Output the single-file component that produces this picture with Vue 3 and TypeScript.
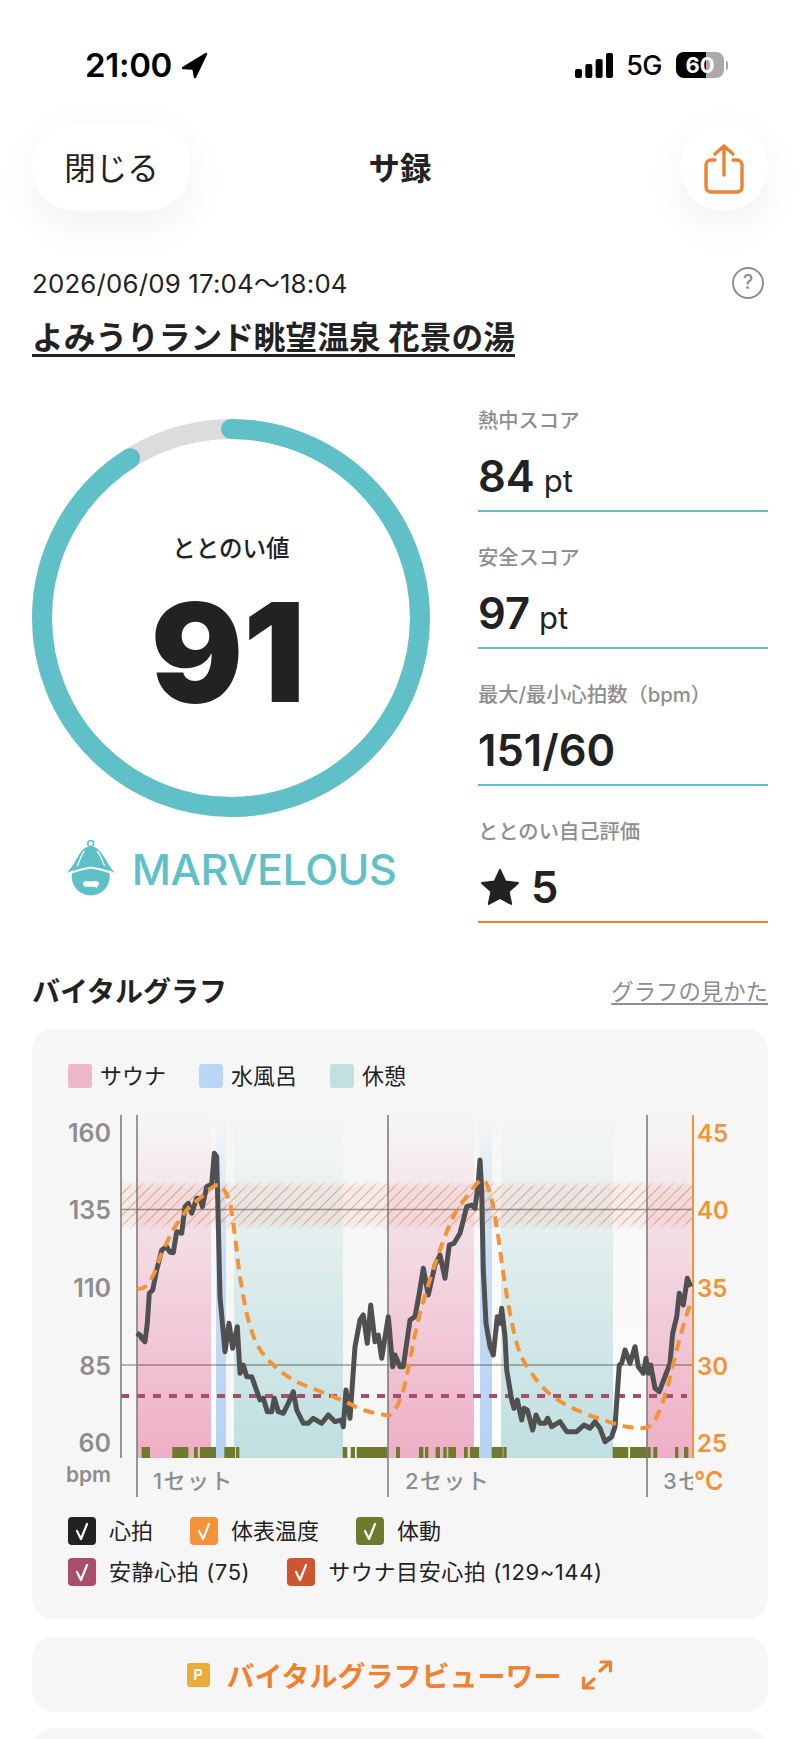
<script setup lang="ts">
type Pt = [number, number]

// traced from the chart, zoom coordinates: x = ox + zx / 3, y = 1090 + zy / 3
const toReal = (pts: Pt[], ox: number): Pt[] => pts.map(([x, y]) => [ox + x / 3, 1090 + y / 3])

const heartA = toReal([
  [320, 730], [330, 735], [335, 745], [345, 755], [352, 700], [358, 610], [368, 600], [380, 540], [395, 480],
  [410, 470], [420, 487], [430, 488], [440, 425], [455, 430], [465, 350], [475, 340], [485, 370], [500, 325],
  [510, 325], [517, 350], [530, 290], [545, 283], [553, 190], [560, 200], [565, 400], [570, 620], [585, 785],
  [597, 700], [608, 775], [622, 710], [630, 850], [640, 825], [650, 860], [665, 860], [690, 930], [700, 925],
  [712, 965], [725, 965], [733, 925], [745, 965], [760, 970], [775, 940], [790, 905], [800, 960], [820, 1000],
  [835, 1000], [850, 985], [875, 1000], [895, 975], [915, 995], [935, 990], [940, 1010], [948, 900], [960, 985],
  [975, 770], [990, 690], [1000, 675], [1012, 760], [1022, 645], [1035, 755], [1045, 735], [1055, 805], [1075, 680],
], 30)

const heartB = toReal([
  [38, 830], [45, 795], [60, 830], [70, 830], [90, 690], [105, 680], [118, 610], [130, 535], [145, 615], [165, 525],
  [180, 495], [195, 565], [208, 465], [222, 460], [240, 430], [260, 350], [275, 345], [285, 355], [295, 280],
  [300, 210], [305, 300], [310, 540], [318, 700], [330, 770], [340, 795], [352, 680], [360, 700], [365, 655],
  [375, 740], [380, 840], [395, 930], [402, 955], [412, 930], [425, 990], [432, 955], [442, 960], [458, 1020],
  [468, 975], [480, 1000], [495, 1000], [503, 985], [515, 1010], [540, 995], [560, 1025], [590, 1025], [612, 1005],
  [630, 1015], [645, 995], [660, 1015], [675, 1055], [695, 1040], [705, 1010], [718, 825], [725, 820], [735, 780],
  [750, 820], [765, 770], [775, 830], [790, 850], [798, 805], [805, 850], [812, 825], [825, 895], [838, 905],
  [870, 820], [878, 730], [890, 680], [898, 610], [910, 645], [922, 565], [932, 590],
], 380)

const tempA = toReal([
  [320, 598], [345, 590], [370, 555], [395, 490], [430, 420], [470, 360], [510, 325], [550, 290], [575, 290],
  [600, 340], [615, 440], [630, 560], [655, 690], [685, 770], [730, 825], [790, 870], [860, 900], [945, 935],
  [1000, 960], [1065, 975],
], 30)

const tempB = toReal([
  [30, 975], [50, 950], [70, 900], [90, 810], [110, 710], [140, 600], [180, 480], [220, 380], [260, 320], [305, 270],
  [330, 310], [350, 410], [370, 550], [390, 670], [420, 790], [470, 870], [520, 920], [590, 960], [670, 990],
  [740, 1010], [800, 1012], [830, 980], [860, 900], [890, 780], [915, 690], [935, 630],
], 380)

const linePath = (pts: Pt[]) => 'M' + pts.map(([x, y]) => `${x.toFixed(1)} ${y.toFixed(1)}`).join('L')

// catmull-rom so the temperature curve stays smooth
const smoothPath = (pts: Pt[]) => {
  let d = `M${pts[0][0].toFixed(1)} ${pts[0][1].toFixed(1)}`
  for (let i = 0; i < pts.length - 1; i++) {
    const p0 = pts[i - 1] ?? pts[i]
    const p1 = pts[i]
    const p2 = pts[i + 1]
    const p3 = pts[i + 2] ?? p2
    const c1x = p1[0] + (p2[0] - p0[0]) / 6
    const c1y = p1[1] + (p2[1] - p0[1]) / 6
    const c2x = p2[0] - (p3[0] - p1[0]) / 6
    const c2y = p2[1] - (p3[1] - p1[1]) / 6
    d += `C${c1x.toFixed(1)} ${c1y.toFixed(1)} ${c2x.toFixed(1)} ${c2y.toFixed(1)} ${p2[0].toFixed(1)} ${p2[1].toFixed(1)}`
  }
  return d
}

const heartPath = linePath([...heartA, ...heartB])
const tempPath = smoothPath([...tempA, ...tempB])

const bands = [
  { x: 137, w: 74, fill: 'url(#gPink)' },
  { x: 211, w: 5, fill: 'url(#gWhite)' },
  { x: 216, w: 10, fill: 'url(#gBlue)' },
  { x: 234, w: 109, fill: 'url(#gTeal)' },
  { x: 388, w: 86, fill: 'url(#gPink)' },
  { x: 474, w: 6, fill: 'url(#gWhite)' },
  { x: 480, w: 12, fill: 'url(#gBlue)' },
  { x: 492, w: 9, fill: 'url(#gWhite)' },
  { x: 501, w: 112, fill: 'url(#gTeal)' },
  { x: 613, w: 34, fill: 'url(#gWhite)' },
  { x: 647, w: 46, fill: 'url(#gPink)' },
]

const motionA: Pt[] = [[335, 360], [427, 475], [492, 503], [510, 558], [583, 615], [618, 628], [938, 952], [962, 975], [980, 1043], [1048, 1072]]
const motionB: Pt[] = [[-20, 22], [48, 60], [117, 130], [135, 145], [167, 180], [190, 200], [205, 228], [252, 263], [270, 298], [335, 368], [370, 380], [698, 745], [750, 812], [820, 832], [885, 895], [912, 925]]
const motion = [
  ...motionA.map(([a, b]) => ({ x: 30 + a / 3, w: (b - a) / 3 })),
  ...motionB.map(([a, b]) => ({ x: 380 + a / 3, w: (b - a) / 3 })),
]

const bpmLabels = [
  { t: '160', y: 1133 },
  { t: '135', y: 1210 },
  { t: '110', y: 1288 },
  { t: '85', y: 1366 },
  { t: '60', y: 1443 },
]
const tempLabels = ['45', '40', '35', '30', '25']

const ringR = 189
const ringLen = 2 * Math.PI * ringR
const ringDash = `${ringLen * 0.91} ${ringLen}`

const stats = [
  { label: '熱中スコア', value: '84', unit: 'pt' },
  { label: '安全スコア', value: '97', unit: 'pt' },
  { label: '最大/最小心拍数（bpm）', value: '151/60', unit: '' },
]

const areaKeys = [
  { label: 'サウナ', cls: 'k-pink' },
  { label: '水風呂', cls: 'k-blue' },
  { label: '休憩', cls: 'k-teal' },
]

const checksTop = [
  { label: '心拍', color: '#222222' },
  { label: '体表温度', color: '#f39338' },
  { label: '体動', color: '#6f7a2e' },
]
const checksBottom = [
  { label: '安静心拍 (75)', color: '#a84e6a' },
  { label: 'サウナ目安心拍 (129~144)', color: '#cf5530' },
]
</script>

<template>
  <div class="page">
    <div class="status">
      <div class="status-left">
        <span class="time">21:00</span>
        <svg class="loc" width="27" height="27" viewBox="0 0 27 27">
          <path d="M25 2 L2 16 L12.5 16.5 L14 25 Z" fill="#000" stroke="#000" stroke-width="2.5" stroke-linejoin="round" />
        </svg>
      </div>
      <div class="status-right">
        <svg width="38" height="25" viewBox="0 0 38 25">
          <rect x="0" y="16" width="7" height="9" rx="2" />
          <rect x="10.3" y="11" width="7" height="14" rx="2" />
          <rect x="20.6" y="6" width="7" height="19" rx="2" />
          <rect x="31" y="0" width="7" height="25" rx="2" />
        </svg>
        <span class="net">5G</span>
        <div class="battery">60</div>
        <span class="battery-tip"></span>
      </div>
    </div>

    <div class="nav">
      <div class="nav-side">
        <button class="close-btn">閉じる</button>
      </div>
      <div class="nav-title">サ録</div>
      <div class="nav-side nav-side--end">
        <button class="share-btn">
          <svg width="44" height="54" viewBox="0 0 44 54" fill="none" stroke="#ee8132" stroke-width="3.4" stroke-linecap="round" stroke-linejoin="round">
            <path d="M13 17 H9 a5 5 0 0 0 -5 5 V44 a5 5 0 0 0 5 5 H35 a5 5 0 0 0 5 -5 V22 a5 5 0 0 0 -5 -5 H31" />
            <path d="M22 32 V3 M13 11 L22 3 L31 11" />
          </svg>
        </button>
      </div>
    </div>

    <main class="content">
      <div class="meta">
        <span class="date">2026/06/09 17:04～18:04</span>
        <span class="help">?</span>
      </div>
      <h1 class="venue"><span>よみうりランド眺望温泉 花景の湯</span></h1>

      <section class="score">
        <div class="score-left">
          <div class="ring">
            <svg width="398" height="398" viewBox="0 0 398 398" fill="none">
              <circle cx="199" cy="199" :r="ringR" stroke="#dcdcdc" stroke-width="20" />
              <circle
                cx="199"
                cy="199"
                :r="ringR"
                stroke="#5fc0c7"
                stroke-width="20"
                stroke-linecap="round"
                :stroke-dasharray="ringDash"
                transform="rotate(-90 199 199)"
              />
            </svg>
            <div class="ring-text">
              <div class="ring-label">ととのい値</div>
              <div class="ring-value">91</div>
            </div>
          </div>
          <div class="rank">
            <svg width="50" height="58" viewBox="16 21 50 58">
              <circle cx="40.7" cy="24.5" r="3" fill="none" stroke="#5fc0c7" stroke-width="1.6" />
              <circle cx="40.7" cy="57.5" r="19" fill="#5fc0c7" />
              <path d="M37 28 C34 29 32 31 29.500 35 C26 40 24 46 17 54 C25 50 33 48 41 47 C49 48 57 50 65 54 C58 46 56 40 52 35 C49 31 47 29 44.5 28 Z" fill="#5fc0c7" />
              <path d="M17 55.500 C25 51.500 33 50 41 48.500 C49 50 57 51.500 65 55.500" fill="none" stroke="#fff" stroke-width="1.8" />
              <path d="M34.500 32 C31 36 29.500 42 27.500 47 M47 32 C50.500 36 52.500 42 54.500 47" fill="none" stroke="#fff" stroke-width="1.2" />
              <path d="M33 64.500 C33 61.500 37 61.500 41 62.500 C45 61.500 49 61.500 49 64.500 C49 67 47.500 67 47 67 L47.500 69.500 C45 67 41 68 38 68 C35 68 33 67 33 64.500 Z" fill="#fff" />
            </svg>
            <span class="rank-name">MARVELOUS</span>
          </div>
        </div>

        <div class="stats">
          <div v-for="s in stats" :key="s.label" class="stat">
            <div class="stat-label">{{ s.label }}</div>
            <div class="stat-value">{{ s.value }}<span v-if="s.unit" class="stat-unit">{{ s.unit }}</span></div>
          </div>
          <div class="stat stat--self">
            <div class="stat-label">ととのい自己評価</div>
            <div class="stat-value">
              <svg class="star" width="40" height="38" viewBox="0 0 40 38">
                <path d="M20 2 L25.300 13.500 L38 15 L28.600 23.500 L31.200 36 L20 29.800 L8.800 36 L11.400 23.500 L2 15 L14.700 13.500 Z" fill="#222" stroke="#222" stroke-width="2" stroke-linejoin="round" />
              </svg>5
            </div>
          </div>
        </div>
      </section>

      <div class="vital-head">
        <h2 class="vital-title">バイタルグラフ</h2>
        <span class="vital-link">グラフの見かた</span>
      </div>

      <section class="card chart-card">
        <div class="keys">
          <div v-for="k in areaKeys" :key="k.label" class="key">
            <i class="swatch" :class="k.cls"></i>
            <span>{{ k.label }}</span>
          </div>
        </div>

        <svg class="chart" width="736" height="392" viewBox="32 1105 736 392">
          <defs>
            <linearGradient id="gPink" x1="0" y1="0" x2="0" y2="1">
              <stop offset="0" stop-color="#eeaec6" stop-opacity="0" />
              <stop offset="1" stop-color="#eeaec6" />
            </linearGradient>
            <linearGradient id="gBlue" x1="0" y1="0" x2="0" y2="1">
              <stop offset="0" stop-color="#b5d3f5" stop-opacity="0" />
              <stop offset="0.4" stop-color="#b5d3f5" stop-opacity="0.7" />
              <stop offset="1" stop-color="#b5d3f5" />
            </linearGradient>
            <linearGradient id="gTeal" x1="0" y1="0" x2="0" y2="1">
              <stop offset="0" stop-color="#bfdfe0" stop-opacity="0" />
              <stop offset="1" stop-color="#bfdfe0" />
            </linearGradient>
            <linearGradient id="gWhite" x1="0" y1="0" x2="0" y2="1">
              <stop offset="0" stop-color="#fff" stop-opacity="0" />
              <stop offset="1" stop-color="#fff" stop-opacity="0.8" />
            </linearGradient>
            <linearGradient id="gFade" x1="0" y1="0" x2="0" y2="1">
              <stop offset="0" stop-color="#fff" stop-opacity="0.1" />
              <stop offset="0.15" stop-color="#fff" />
              <stop offset="0.85" stop-color="#fff" />
              <stop offset="1" stop-color="#fff" stop-opacity="0.1" />
            </linearGradient>
            <mask id="hatchFade" maskUnits="userSpaceOnUse" x="121" y="1181" width="572" height="48">
              <rect x="121" y="1181" width="572" height="48" fill="url(#gFade)" />
            </mask>
            <pattern id="hatch" width="7.5" height="7.5" patternUnits="userSpaceOnUse" patternTransform="rotate(45)">
              <line x1="0" y1="0" x2="0" y2="7.5" stroke="#cf5530" stroke-opacity="0.55" stroke-width="1.6" />
            </pattern>
            <clipPath id="plotClip">
              <rect x="121" y="1105" width="572" height="392" />
            </clipPath>
          </defs>

          <rect v-for="b in bands" :key="b.x" :x="b.x" y="1115" :width="b.w" height="343" :fill="b.fill" />

          <g mask="url(#hatchFade)">
            <rect x="121" y="1181" width="572" height="48" fill="#e8a58c" fill-opacity="0.14" />
            <rect x="121" y="1181" width="572" height="48" fill="url(#hatch)" />
          </g>

          <line x1="121" y1="1209.500" x2="693" y2="1209.500" stroke="#444" stroke-opacity="0.5" stroke-width="1.500" />
          <line x1="121" y1="1365" x2="693" y2="1365" stroke="#444" stroke-opacity="0.5" stroke-width="1.500" />

          <line x1="121" y1="1396" x2="687" y2="1396" stroke="#a84e6a" stroke-width="4" stroke-dasharray="8 8" />

          <rect v-for="m in motion" :key="m.x" :x="m.x" y="1447" :width="m.w" height="11" fill="#6f7a2e" />

          <line x1="121" y1="1115" x2="121" y2="1458" stroke="#777" stroke-width="1.500" />
          <line x1="137" y1="1115" x2="137" y2="1497" stroke="#777" stroke-width="1.500" />
          <line x1="388" y1="1115" x2="388" y2="1497" stroke="#777" stroke-width="1.500" />
          <line x1="647" y1="1115" x2="647" y2="1497" stroke="#777" stroke-width="1.500" />
          <line x1="693" y1="1115" x2="693" y2="1458" stroke="#f39338" stroke-width="2" />

          <path :d="heartPath" fill="none" stroke="#505050" stroke-width="5" stroke-linejoin="round" />
          <path :d="tempPath" fill="none" stroke="#f39338" stroke-width="4" stroke-dasharray="11 7" />

          <text v-for="l in bpmLabels" :key="l.t" class="axis-bpm" x="111" :y="l.y + 9">{{ l.t }}</text>
          <text v-for="(t, i) in tempLabels" :key="t" class="axis-temp" x="697" :y="bpmLabels[i].y + 9">{{ t }}</text>

          <text class="axis-unit" x="111" y="1482">bpm</text>
          <text class="axis-deg" x="694" y="1490">°C</text>

          <g clip-path="url(#plotClip)">
            <text class="set-label" x="153" y="1489">1セット</text>
            <text class="set-label" x="405" y="1489">2セット</text>
            <text class="set-label" x="663" y="1489">3セット</text>
          </g>
        </svg>

        <div class="checks">
          <div class="check-row">
            <div v-for="c in checksTop" :key="c.label" class="check">
              <i class="box" :style="{ background: c.color }">
                <svg width="28" height="28" viewBox="0 0 28 28" fill="none"><path d="M9 14 L13 22 L19 7" stroke="#fff" stroke-width="2.200" stroke-linecap="round" stroke-linejoin="round" /></svg>
              </i>
              <span>{{ c.label }}</span>
            </div>
          </div>
          <div class="check-row check-row--wide">
            <div v-for="c in checksBottom" :key="c.label" class="check">
              <i class="box" :style="{ background: c.color }">
                <svg width="28" height="28" viewBox="0 0 28 28" fill="none"><path d="M9 14 L13 22 L19 7" stroke="#fff" stroke-width="2.200" stroke-linecap="round" stroke-linejoin="round" /></svg>
              </i>
              <span>{{ c.label }}</span>
            </div>
          </div>
        </div>
      </section>

      <section class="card viewer">
        <i class="badge">P</i>
        <span class="viewer-text">バイタルグラフビューワー</span>
        <svg width="32" height="30" viewBox="0 0 32 30" fill="none" stroke="#ee8132" stroke-width="3.200" stroke-linecap="round" stroke-linejoin="round">
          <path d="M19 11 L29 2 M20 2 H29.500 V11" />
          <path d="M13 19 L3 28 M2.500 18 V28 H12" />
        </svg>
      </section>

      <section class="card stub"></section>
    </main>
  </div>
</template>

<style scoped>
.page {
  position: relative;
  width: 800px;
  height: 1739px;
  overflow: hidden;
  background: #fff;
  color: #222;
  font-family: Inter, "Noto Sans CJK JP", sans-serif;
}

/* ステータスバー */
.status {
  display: flex;
  justify-content: space-between;
  box-sizing: border-box;
  height: 122px;
  padding: 50px 72px 0 85px;
  color: #000;
}

.status-left,
.status-right {
  display: flex;
  align-items: center;
  height: 30px;
}

.time {
  font-size: 33px;
  font-weight: 600;
  letter-spacing: -0.3px;
}

.loc {
  margin-left: 9px;
}

.net {
  margin-left: 13px;
  font-size: 27px;
  font-weight: 500;
  letter-spacing: -0.5px;
}

.battery {
  width: 48px;
  height: 26px;
  margin-left: 14px;
  border-radius: 8px;
  background: linear-gradient(90deg, #000 0, #000 30px, #aaa 30px);
  color: #fff;
  font-size: 22px;
  font-weight: 700;
  line-height: 26px;
  text-align: center;
}

.battery-tip {
  width: 2px;
  height: 9px;
  margin-left: 2px;
  border-radius: 0 2px 2px 0;
  background: #aaa;
}

/* ナビ */
.nav {
  display: grid;
  grid-template-columns: 1fr auto 1fr;
  align-items: center;
  height: 89px;
  padding: 0 32px;
}

.nav-side {
  display: flex;
}

.nav-side--end {
  justify-content: flex-end;
}

.close-btn,
.share-btn {
  height: 89px;
  border: none;
  background: #fff;
  box-shadow: 0 14px 44px rgba(0, 0, 0, 0.06);
  font-family: inherit;
  color: #222;
}

.close-btn {
  width: 159px;
  padding: 0 0 2px;
  border-radius: 44px;
  font-size: 31.5px;
}

.share-btn {
  display: flex;
  align-items: center;
  justify-content: center;
  width: 88px;
  padding: 7px 0 0;
  border-radius: 50%;
}

.nav-title {
  padding-bottom: 2px;
  font-size: 31.5px;
  font-weight: 700;
}

/* 本文 */
.content {
  padding: 0 32px;
}

.meta {
  display: flex;
  align-items: center;
  justify-content: space-between;
  height: 32px;
  margin-top: 56px;
}

.date {
  padding-bottom: 4px;
  font-size: 25.8px;
  letter-spacing: 0.2px;
}

.help {
  box-sizing: border-box;
  width: 32px;
  height: 32px;
  margin-right: 4px;
  border: 2.5px solid #8e8e8e;
  border-radius: 50%;
  color: #8e8e8e;
  font-size: 20px;
  font-weight: 500;
  line-height: 27px;
  text-align: center;
}

.venue {
  display: flex;
  margin: 22px 0 0;
  font-size: 31.7px;
  font-weight: 700;
}

.venue span {
  border-bottom: 3px solid #222;
  line-height: 33px;
}

.score {
  display: grid;
  grid-template-columns: 398px 290px;
  justify-content: space-between;
  margin-top: 51px;
}

.score-left {
  padding-top: 11px;
}

.ring {
  position: relative;
  height: 398px;
}

.ring-text {
  position: absolute;
  top: 113px;
  right: 0;
  left: 0;
  text-align: center;
}

.ring-label {
  font-size: 23.5px;
  font-weight: 500;
  line-height: 34px;
}

.ring-value {
  margin-top: 18px;
  padding-right: 6px;
  font-size: 137px;
  font-weight: 900;
  line-height: 137px;
}

.rank {
  display: flex;
  align-items: center;
  justify-content: center;
  gap: 16px;
  margin-top: 23px;
}

.rank-name {
  color: #5fc0c7;
  font-size: 43px;
  font-weight: 500;
  letter-spacing: -0.5px;
}

.stats {
  display: flex;
  flex-direction: column;
  gap: 34px;
  padding-top: 1px;
}

.stat {
  box-sizing: border-box;
  height: 103px;
  border-bottom: 2px solid #5fc0c7;
}

.stat--self {
  border-bottom-color: #ee8132;
}

.stat-label {
  color: #8e8e8e;
  font-size: 20.3px;
  font-weight: 500;
  line-height: 24px;
}

.stat-value {
  display: flex;
  align-items: baseline;
  margin-top: 18px;
  font-size: 43.5px;
  font-weight: 600;
  line-height: 50px;
}

.stat-unit {
  margin-left: 9px;
  font-size: 31px;
  font-weight: 400;
}

.star {
  align-self: center;
  margin: 0 11px 0 2px;
}

.vital-head {
  display: flex;
  align-items: center;
  justify-content: space-between;
  height: 36px;
  margin-top: 49px;
}

.vital-title {
  margin: 0;
  font-size: 28px;
  font-weight: 700;
}

.vital-link {
  color: #8e8e8e;
  font-size: 22.4px;
  text-decoration: underline;
  text-underline-offset: 3px;
}

.card {
  border-radius: 22px;
  background: #f6f6f6;
}

.chart-card {
  box-sizing: border-box;
  height: 590px;
  margin-top: 21px;
  padding-top: 35px;
}

.keys {
  display: flex;
  gap: 33px;
  height: 24px;
  margin-bottom: 17px;
  padding-left: 36px;
  line-height: 24px;
}

.key {
  display: flex;
  align-items: center;
  gap: 8px;
  font-size: 22px;
}

.swatch {
  width: 24px;
  height: 24px;
  border-radius: 3px;
}

.k-pink {
  background: #efb6cb;
}

.k-blue {
  background: #b9d6f6;
}

.k-teal {
  background: #c4dfdf;
}

.chart {
  display: block;
}

.axis-bpm,
.axis-temp {
  font-family: Inter, sans-serif;
  font-weight: 600;
}

.axis-bpm {
  fill: #8e8e8e;
  font-size: 25px;
  text-anchor: end;
}

.axis-temp {
  fill: #f39338;
  font-size: 24px;
}

.axis-unit {
  fill: #8e8e8e;
  font-size: 21px;
  font-weight: 600;
  text-anchor: end;
}

.axis-deg {
  fill: #f39338;
  font-size: 25px;
  font-weight: 600;
}

.set-label {
  fill: #8e8e8e;
  font-size: 22px;
  font-weight: 500;
  letter-spacing: 1.4px;
}

.checks {
  display: flex;
  flex-direction: column;
  gap: 13px;
  margin-top: 20px;
  padding-left: 36px;
}

.check-row {
  display: flex;
  gap: 37px;
}

.check-row--wide {
  letter-spacing: 0.6px;
}

.check {
  display: flex;
  align-items: center;
  gap: 13px;
  font-size: 22px;
  line-height: 28px;
}

.box {
  display: block;
  width: 28px;
  height: 28px;
  border-radius: 4px;
}

.box svg {
  display: block;
}

.viewer {
  display: flex;
  align-items: center;
  justify-content: center;
  height: 75px;
  margin-top: 18px;
  color: #ee8132;
}

.badge {
  width: 23px;
  height: 24px;
  margin-right: 17px;
  border-radius: 3px;
  background: #e8ae39;
  color: #fff;
  font-size: 15px;
  font-style: normal;
  font-weight: 600;
  line-height: 24px;
  text-align: center;
}

.viewer-text {
  margin-right: 20px;
  font-size: 28px;
  font-weight: 700;
}

.stub {
  height: 80px;
  margin-top: 16px;
}
</style>

<style>
html,
body {
  background: #fff;
}
</style>
